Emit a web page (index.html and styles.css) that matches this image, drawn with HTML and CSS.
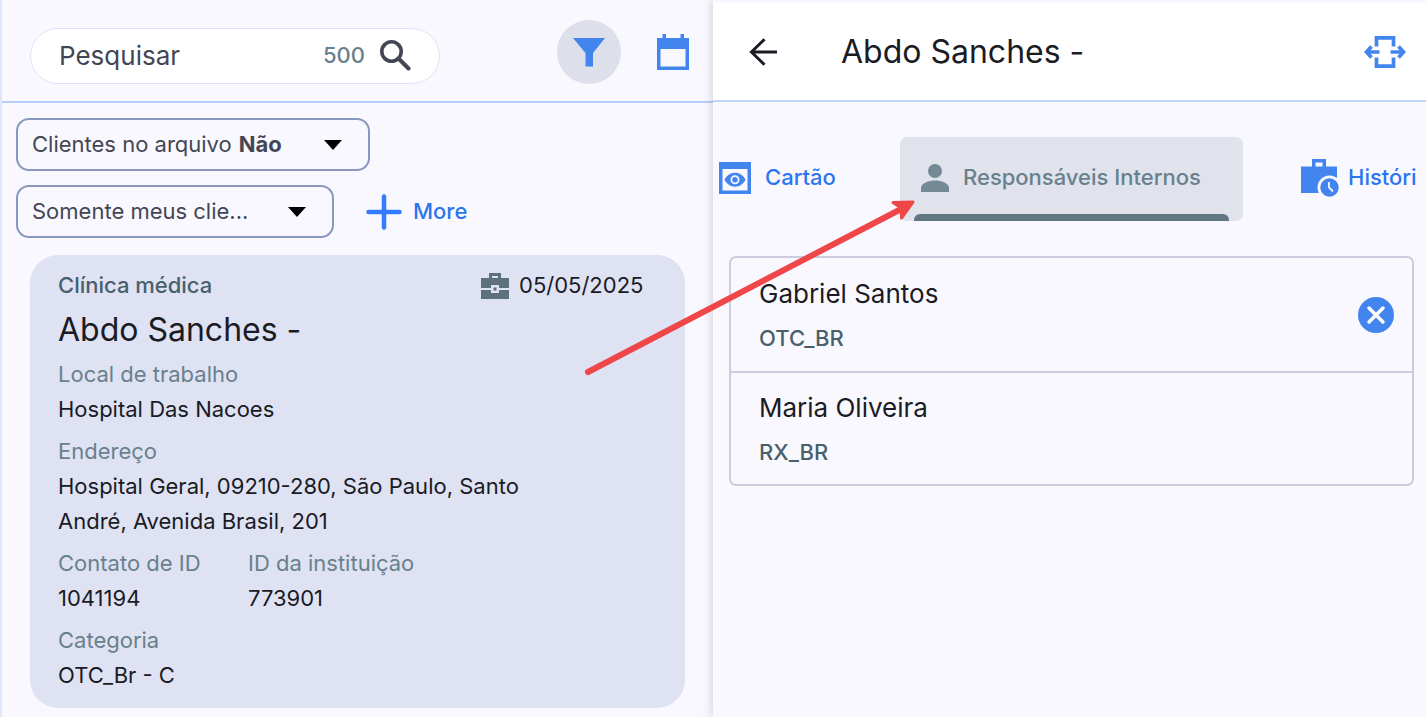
FILE: index.html
```html
<!DOCTYPE html>
<html lang="pt-BR">
<head>
    <meta charset="UTF-8" />
    <meta name="viewport" content="width=device-width, initial-scale=1.0" />
    <title>Clientes</title>
    <link rel="stylesheet" href="styles.css">
</head>
<body>
    <div class="app">
        <section class="clients">
            <header class="clients-header">
                <form class="search">
                    <input class="search-input" type="text" placeholder="Pesquisar" aria-label="Pesquisar" />
                    <span class="search-count">500</span>
                    <button type="button" class="icon-btn" aria-label="Pesquisar">
                        <svg width="32" height="32" viewBox="0 0 32 32" fill="none" stroke="#434654">
                            <circle cx="12.500" cy="11.500" r="9.700" stroke-width="3.600" />
                            <path d="M19.500 18.500L29.500 28.500" stroke-width="4" stroke-linecap="round" />
                        </svg>
                    </button>
                </form>
                <div class="header-actions">
                    <button type="button" class="icon-btn filter-btn" aria-label="Filtro">
                        <svg width="32" height="30" viewBox="0 0 32 30" fill="#4285ee">
                            <path d="M0 1H32L20 16V29.500H12.500V16Z" />
                        </svg>
                    </button>
                    <button type="button" class="icon-btn" aria-label="Calendário">
                        <svg width="32" height="36" viewBox="0 0 32 36" fill="#4285ee">
                            <path fill-rule="evenodd" d="M0 4H5.500V0H9V4H23.500V0H27V4H32V36H0ZM3.500 15V32.500H28.500V15Z" />
                        </svg>
                    </button>
                </div>
            </header>

            <div class="filters">
                <label class="chip chip-wide">
                    <span>Clientes no arquivo</span>
                    <select class="chip-select bold">
                        <option>Não</option>
                    </select>
                    <svg class="caret" width="18" height="10" viewBox="0 0 18 10"><path d="M0 0H18L9 10Z" /></svg>
                </label>
                <div class="filter-row">
                    <div class="chip">
                        <select class="chip-select" aria-label="Somente meus clientes">
                            <option>Somente meus clie...</option>
                        </select>
                        <svg class="caret" width="18" height="10" viewBox="0 0 18 10"><path d="M0 0H18L9 10Z" /></svg>
                    </div>
                    <button type="button" class="more-btn">
                        <svg width="36" height="36" viewBox="0 0 36 36" stroke="#337bff" stroke-width="4.500" stroke-linecap="round">
                            <path d="M18 2.500V33.500M2.500 18H33.500" />
                        </svg>
                        More
                    </button>
                </div>
            </div>

            <article class="card">
                <div class="card-top">
                    <span class="specialty">Clínica médica</span>
                    <span class="date">
                        <svg width="28" height="26" viewBox="0 0 28 26" fill="#5b727d">
                            <path fill-rule="evenodd" d="M8 0H20V5H28V15H18V12H10V15H0V5H8ZM11 3V5H17V3Z" />
                            <path d="M0 17H10V20H18V17H28V26H0Z" />
                            <rect x="12.500" y="14.500" width="3" height="3" />
                        </svg>
                        05/05/2025
                    </span>
                </div>
                <h2 class="card-title">Abdo Sanches -</h2>
                <dl class="details">
                    <div>
                        <dt>Local de trabalho</dt>
                        <dd>Hospital Das Nacoes</dd>
                    </div>
                    <div>
                        <dt>Endereço</dt>
                        <dd>Hospital Geral, 09210-280, São Paulo, Santo<br>André, Avenida Brasil, 201</dd>
                    </div>
                    <div class="ids">
                        <div>
                            <dt>Contato de ID</dt>
                            <dd>1041194</dd>
                        </div>
                        <div>
                            <dt>ID da instituição</dt>
                            <dd>773901</dd>
                        </div>
                    </div>
                    <div>
                        <dt>Categoria</dt>
                        <dd>OTC_Br - C</dd>
                    </div>
                </dl>
            </article>
        </section>

        <section class="profile">
            <header class="profile-header">
                <button type="button" class="icon-btn" aria-label="Voltar">
                    <svg width="28" height="28" viewBox="0 0 28 28" fill="none" stroke="#1a1b23" stroke-width="3">
                        <path d="M28 14H2.500M15.500 1.200L2.500 14L15.500 26.800" />
                    </svg>
                </button>
                <h1 class="profile-title">Abdo Sanches -</h1>
                <button type="button" class="icon-btn" aria-label="Expandir">
                    <svg width="42" height="32" viewBox="0 0 42 32" fill="none" stroke="#4285ee" stroke-width="3.700">
                        <path d="M12.500 10.500V1.800H29.500V10.500M12.500 21.500V30.200H29.500V21.500" />
                        <path d="M15.500 16H3M7.500 10.500L2.500 16L7.500 21.500M26.500 16H39M34.500 10.500L39.500 16L34.500 21.500" />
                    </svg>
                </button>
            </header>

            <nav class="tabs">
                <button type="button" class="tab">
                    <svg width="32" height="32" viewBox="0 0 32 32" fill="#4285ee">
                        <path fill-rule="evenodd" d="M0 0H32V32H0ZM3.500 7V28.500H28.500V7Z" />
                        <path d="M5.500 17.800C7.500 13.500 11.500 10.800 16 10.800S24.500 13.500 26.500 17.800C24.500 22 20.500 24.800 16 24.800S7.500 22 5.500 17.800Z" />
                        <circle cx="16" cy="17.800" r="3.600" stroke="#faf8ff" stroke-width="1.800" />
                    </svg>
                    Cartão
                </button>
                <button type="button" class="tab active">
                    <svg width="28" height="28" viewBox="0 0 28 28" fill="#738996">
                        <circle cx="14" cy="7" r="7" />
                        <path d="M0 28V24C0 19 8 16.500 14 16.500S28 19 28 24V28Z" />
                    </svg>
                    Responsáveis Internos
                </button>
                <button type="button" class="tab history">
                    <svg width="38" height="38" viewBox="0 0 38 38" fill="#4285ee">
                        <path fill-rule="evenodd" d="M0 7.500H11V0H25V7.500H36V34H0ZM14.500 3.500V7.500H21.500V3.500Z" />
                        <circle cx="28.500" cy="28.500" r="12" fill="#faf8ff" />
                        <circle cx="28.500" cy="28.500" r="9.200" />
                        <path d="M28 23V28.500L32 32.500" fill="none" stroke="#faf8ff" stroke-width="1.800" />
                    </svg>
                    Históri
                </button>
            </nav>

            <ul class="people">
                <li class="person">
                    <div class="person-info">
                        <div class="person-name">Gabriel Santos</div>
                        <div class="person-role">OTC_BR</div>
                    </div>
                    <button type="button" class="icon-btn" aria-label="Remover">
                        <svg width="36" height="36" viewBox="0 0 36 36">
                            <circle cx="18" cy="18" r="18" fill="#4285ee" />
                            <path d="M11 11L25 25M25 11L11 25" stroke="#fff" stroke-width="3.500" stroke-linecap="round" />
                        </svg>
                    </button>
                </li>
                <li class="person">
                    <div class="person-info">
                        <div class="person-name">Maria Oliveira</div>
                        <div class="person-role">RX_BR</div>
                    </div>
                </li>
            </ul>
        </section>

        <!-- callout pointing at the active tab -->
        <svg class="pointer" width="336" height="182" viewBox="0 0 336 182" fill="none" stroke="#ef4649" stroke-linecap="round" stroke-linejoin="round">
            <path d="M8 176L325 11" stroke-width="6" />
            <path d="M313 6.500L333 6L321.500 22L321 12Z" fill="#ef4649" stroke-width="3" />
        </svg>
    </div>
</body>
</html>
```

FILE: styles.css
```css
* {
    box-sizing: border-box;
}

body {
    margin: 0;
    background: #faf8ff;
    color: #1a1b23;
    font-family: Inter, Roboto, sans-serif;
    font-size: 22px;
    line-height: 35px;
    overflow: hidden;
}

h1, h2, dl, dd, ul {
    margin: 0;
    padding: 0;
}

button, input, select {
    font: inherit;
    color: inherit;
    background: none;
    border: none;
    padding: 0;
    margin: 0;
}

button {
    cursor: pointer;
}

svg {
    display: block;
    flex-shrink: 0;
}

.app {
    position: relative;
    display: grid;
    grid-template-columns: 1fr 1fr;
    min-height: 100vh;
}

.icon-btn {
    display: flex;
    align-items: center;
    justify-content: center;
}

/* left side */
.clients {
    border-left: 2px solid #dde6fa;
    min-width: 0;
}

.clients-header {
    display: flex;
    align-items: center;
    justify-content: space-between;
    height: 103px;
    padding: 2px 24px 0 28px;
    border-bottom: 2px solid #b9cdfb;
}

.search {
    display: flex;
    align-items: center;
    width: 410px;
    height: 56px;
    margin-top: 8px;
    padding: 0 28px;
    background: #fff;
    border: 1px solid #dde3f7;
    border-radius: 28px;
}

.search-input {
    flex: 1;
    min-width: 0;
    font-size: 26px;
    outline: none;
}

.search-input::placeholder {
    color: #434654;
    opacity: 1;
}

.search-count {
    margin-right: 14px;
    font-weight: 500;
    color: #68818c;
}

.header-actions {
    display: flex;
    align-items: center;
    gap: 36px;
}

.filter-btn {
    width: 64px;
    height: 64px;
    border-radius: 50%;
    background: #dddfea;
}

.filters {
    display: flex;
    flex-direction: column;
    align-items: flex-start;
    gap: 14px;
    padding: 15px 14px 14px;
    color: #434654;
}

.filter-row {
    display: flex;
    align-items: center;
    gap: 32px;
}

.chip {
    display: flex;
    align-items: center;
    min-width: 318px;
    height: 53px;
    padding: 0 26px 0 14px;
    border: 2px solid #8797bd;
    border-radius: 13px;
}

.chip-wide {
    min-width: 354px;
}

.chip-select {
    appearance: none;
    outline: none;
}

.bold {
    margin-left: 7px;
    font-weight: 700;
}

.caret {
    margin-left: auto;
    pointer-events: none;
}

.more-btn {
    display: flex;
    align-items: center;
    gap: 11px;
    color: #2b76f0;
    font-weight: 500;
}

.card {
    margin: 3px 28px 8px;
    padding: 13px 28px 15px;
    background: #dee2f3;
    border-radius: 28px;
}

.card-top {
    display: flex;
    justify-content: space-between;
}

.specialty {
    font-weight: 500;
    color: #48606b;
}

.date {
    display: flex;
    align-items: center;
    gap: 10px;
    min-width: 176px;
}

.card-title {
    font-size: 32px;
    font-weight: 400;
    line-height: 54px;
}

.details {
    display: flex;
    flex-direction: column;
    gap: 7px;
}

.details dt {
    color: #68818c;
}

.ids {
    display: grid;
    grid-template-columns: 190px 1fr;
}

/* right side */
.profile {
    min-width: 0;
    overflow: hidden;
    background: #faf8ff;
    box-shadow: 0 0 10px rgba(0, 0, 0, 0.2);
}

.profile-header {
    display: flex;
    align-items: center;
    height: 102px;
    padding: 0 20px 0 36px;
    background: #fff;
    border-top: 3px solid #faf8ff;
    border-bottom: 2px solid #c3d4fb;
}

.profile-title {
    flex: 1;
    margin-left: 64px;
    font-size: 32px;
    font-weight: 400;
}

.tabs {
    display: flex;
    gap: 58px;
    padding: 35px 0 0 6px;
}

.tab {
    display: flex;
    align-items: center;
    gap: 14px;
    min-width: 123px;
    height: 84px;
    flex-shrink: 0;
    padding-bottom: 3px;
    color: #2b76f0;
    font-weight: 500;
    white-space: nowrap;
}

.tab.active {
    position: relative;
    min-width: 343px;
    padding: 0 14px 3px 21px;
    background: #e0e2ec;
    border-radius: 7px;
    color: #68818c;
}

.tab.active::after {
    content: "";
    position: absolute;
    left: 14px;
    right: 14px;
    bottom: 0;
    height: 7px;
    background: #607783;
    border-radius: 6px 6px 0 0;
}

.tab.history {
    gap: 9px;
}

.people {
    margin: 35px 12px 0 16px;
    list-style: none;
    border: 2px solid #c9cddd;
    border-radius: 7px;
}

.person {
    display: flex;
    align-items: center;
    justify-content: space-between;
    height: 113px;
    padding: 0 18px 0 28px;
}

.person + .person {
    border-top: 2px solid #c9cddd;
}

.person-info {
    padding-top: 2px;
}

.person-name {
    font-size: 26px;
    line-height: 44px;
}

.person-role {
    font-weight: 500;
    line-height: 44px;
    color: #48606b;
}

/* lies over both panels */
.pointer {
    position: absolute;
    left: 580px;
    top: 196px;
    pointer-events: none;
}
```
